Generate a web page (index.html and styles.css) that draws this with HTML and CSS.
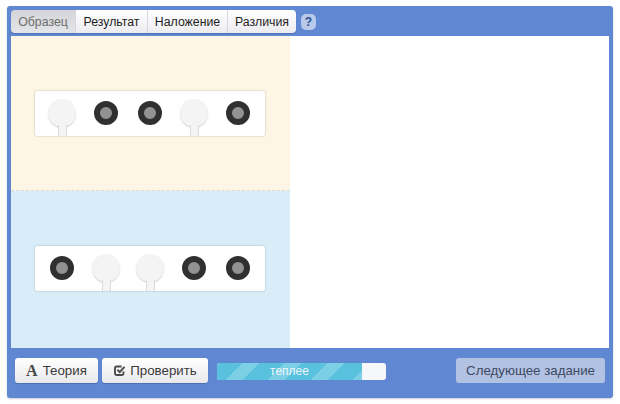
FILE: index.html
```html
<!DOCTYPE html>
<html lang="ru">
<head>
<meta charset="utf-8">
<title>Задание</title>
<link rel="stylesheet" href="styles.css">
</head>
<body>
<div class="frame">
  <div class="toolbar">
    <div class="tabs">
      <div class="tab tab-active tab-w1">Образец</div>
      <div class="tab tab-w2">Результат</div>
      <div class="tab tab-w3">Наложение</div>
      <div class="tab tab-w4">Различия</div>
    </div>
    <div class="help">?</div>
  </div>
  <div class="stage">
    <div class="panes">
      <div class="pane pane-top">
        <div class="card">
          <div class="lamp"><div class="lamp-stem"></div></div>
          <div class="slot"><div class="dot"></div></div>
          <div class="slot"><div class="dot"></div></div>
          <div class="lamp"><div class="lamp-stem"></div></div>
          <div class="slot"><div class="dot"></div></div>
        </div>
      </div>
      <div class="pane pane-bottom">
        <div class="card">
          <div class="slot"><div class="dot"></div></div>
          <div class="lamp"><div class="lamp-stem"></div></div>
          <div class="lamp"><div class="lamp-stem"></div></div>
          <div class="slot"><div class="dot"></div></div>
          <div class="slot"><div class="dot"></div></div>
        </div>
      </div>
    </div>
  </div>
  <div class="footer">
    <div class="btn btn-theory">
      <span class="glyph-a">A</span>Теория
    </div>
    <div class="btn btn-check">
      <svg class="check-icon" width="13" height="13" viewBox="0 0 13 13" aria-hidden="true">
        <path d="M10.500 7.500v2a1.500 1.500 0 0 1-1.500 1.500h-5.500a1.500 1.500 0 0 1-1.500-1.500v-5.500a1.500 1.500 0 0 1 1.500-1.500h5" fill="none" stroke="#4a4a4a" stroke-width="1.900"/>
        <path d="M4.500 5.800l2.200 2.300 4.800-5.300" fill="none" stroke="#4a4a4a" stroke-width="2"/>
      </svg>
      Проверить
    </div>
    <div class="meter">
      <div class="meter-fill"></div>
      <div class="meter-label">теплее</div>
    </div>
    <div class="btn-next">Следующее задание</div>
  </div>
</div>
</body>
</html>
```
FILE: styles.css
```css
html, body {
  margin: 0;
  padding: 0;
  background: #fff;
}
body {
  width: 620px;
  height: 404px;
  padding: 6px 7px;
  box-sizing: border-box;
  font-family: "Liberation Sans", Arial, sans-serif;
  overflow: hidden;
}
.frame {
  width: 606px;
  height: 392px;
  box-sizing: border-box;
  background: #6088d2;
  border-radius: 3px;
  padding: 4px;
  display: flex;
  flex-direction: column;
  box-shadow: 0 1px 2px rgba(80, 90, 110, 0.3);
}
.toolbar {
  height: 23px;
  display: flex;
  align-items: center;
  gap: 5px;
  flex: none;
}
.tabs {
  display: flex;
  height: 23px;
  width: 285px;
  border-radius: 4px;
  overflow: hidden;
  box-shadow: 0 1px 1px rgba(40, 60, 110, 0.3);
}
.tab {
  box-sizing: border-box;
  height: 23px;
  display: flex;
  align-items: center;
  justify-content: center;
  font-size: 12.300px;
  color: #1e1e1e;
  background: linear-gradient(#ffffff, #ececf0);
  border-right: 1px solid #d5d8e0;
}
.tab:last-child { border-right: 0; }
.tab-w1 { width: 65px; }
.tab-w2 { width: 72px; }
.tab-w3 { width: 80px; }
.tab-w4 { width: 68px; }
.tab-active {
  color: #6e6e6e;
  background: linear-gradient(#d4d5d8, #e4e5e8);
}
.help {
  width: 15px;
  height: 16px;
  border-radius: 5px;
  background: #b9c9ea;
  color: #2c4f96;
  font-size: 12px;
  font-weight: bold;
  display: flex;
  align-items: center;
  justify-content: center;
}
.stage {
  margin-top: 3px;
  height: 312px;
  flex: none;
  background: #fff;
}
.panes {
  width: 279px;
  height: 312px;
  display: flex;
  flex-direction: column;
}
.pane {
  flex: none;
  display: flex;
  box-sizing: border-box;
  padding-left: 24px;
}
.pane-top {
  height: 155px;
  background: #fdf6e4;
  padding-top: 55px;
  border-bottom: 1px dashed #d8dad3;
}
.pane-bottom {
  height: 157px;
  background: #d9edf9;
  padding-top: 55px;
}
.card {
  box-sizing: border-box;
  width: 230px;
  height: 45px;
  background: #fff;
  border-radius: 2px;
  box-shadow: 0 0 2px rgba(120, 120, 100, 0.55);
  display: flex;
  padding: 8px 0 0 13px;
  gap: 16px;
}
.slot {
  width: 28px;
  height: 28px;
  display: flex;
  align-items: center;
  justify-content: center;
}
.dot {
  box-sizing: border-box;
  width: 24px;
  height: 24px;
  border-radius: 50%;
  background: #929292;
  border: 6.500px solid #303030;
}
.lamp {
  position: relative;
  box-sizing: border-box;
  width: 28px;
  height: 28px;
  border-radius: 50%;
  background: #f4f4f5;
  box-shadow: 0 1px 1px rgba(120, 120, 120, 0.35);
}
.lamp-stem {
  position: absolute;
  left: 10px;
  top: 26px;
  box-sizing: border-box;
  width: 9px;
  height: 11px;
  background: #f4f4f5;
  border-left: 1px solid #dcdcdc;
  border-right: 1px solid #dcdcdc;
}
.footer {
  flex: 1;
  display: flex;
  align-items: flex-start;
  padding: 10px 4px 0;
}
.btn {
  box-sizing: border-box;
  height: 25px;
  border-radius: 3px;
  background: linear-gradient(#ffffff, #e9e9ec);
  color: #3a3a3a;
  font-size: 13.300px;
  display: flex;
  align-items: center;
  justify-content: center;
  box-shadow: 0 1px 1px rgba(40, 60, 110, 0.35);
}
.btn-theory {
  width: 83px;
  margin-right: 4px;
}
.btn-check {
  width: 106px;
  margin-right: 9px;
}
.glyph-a {
  font-family: "Liberation Serif", serif;
  font-weight: bold;
  font-size: 16px;
  color: #4a4a4a;
  margin-right: 5px;
}
.check-icon {
  margin-right: 4px;
}
.meter {
  position: relative;
  margin-top: 5px;
  width: 169px;
  height: 17px;
  border-radius: 3px;
  background: #f6f7fa;
  overflow: hidden;
}
.meter-fill {
  width: 145px;
  height: 17px;
  background: repeating-linear-gradient(135deg, #59c1de 0 18px, #7ccfe5 18px 30px);
}
.meter-label {
  position: absolute;
  left: 0;
  top: 0;
  width: 145px;
  line-height: 17px;
  text-align: center;
  color: #eef6fa;
  font-size: 12px;
}
.btn-next {
  margin-left: auto;
  box-sizing: border-box;
  width: 149px;
  height: 25px;
  border-radius: 3px;
  background: #b2c2e2;
  color: #3e4a62;
  font-size: 13.300px;
  display: flex;
  align-items: center;
  justify-content: center;
}
```
